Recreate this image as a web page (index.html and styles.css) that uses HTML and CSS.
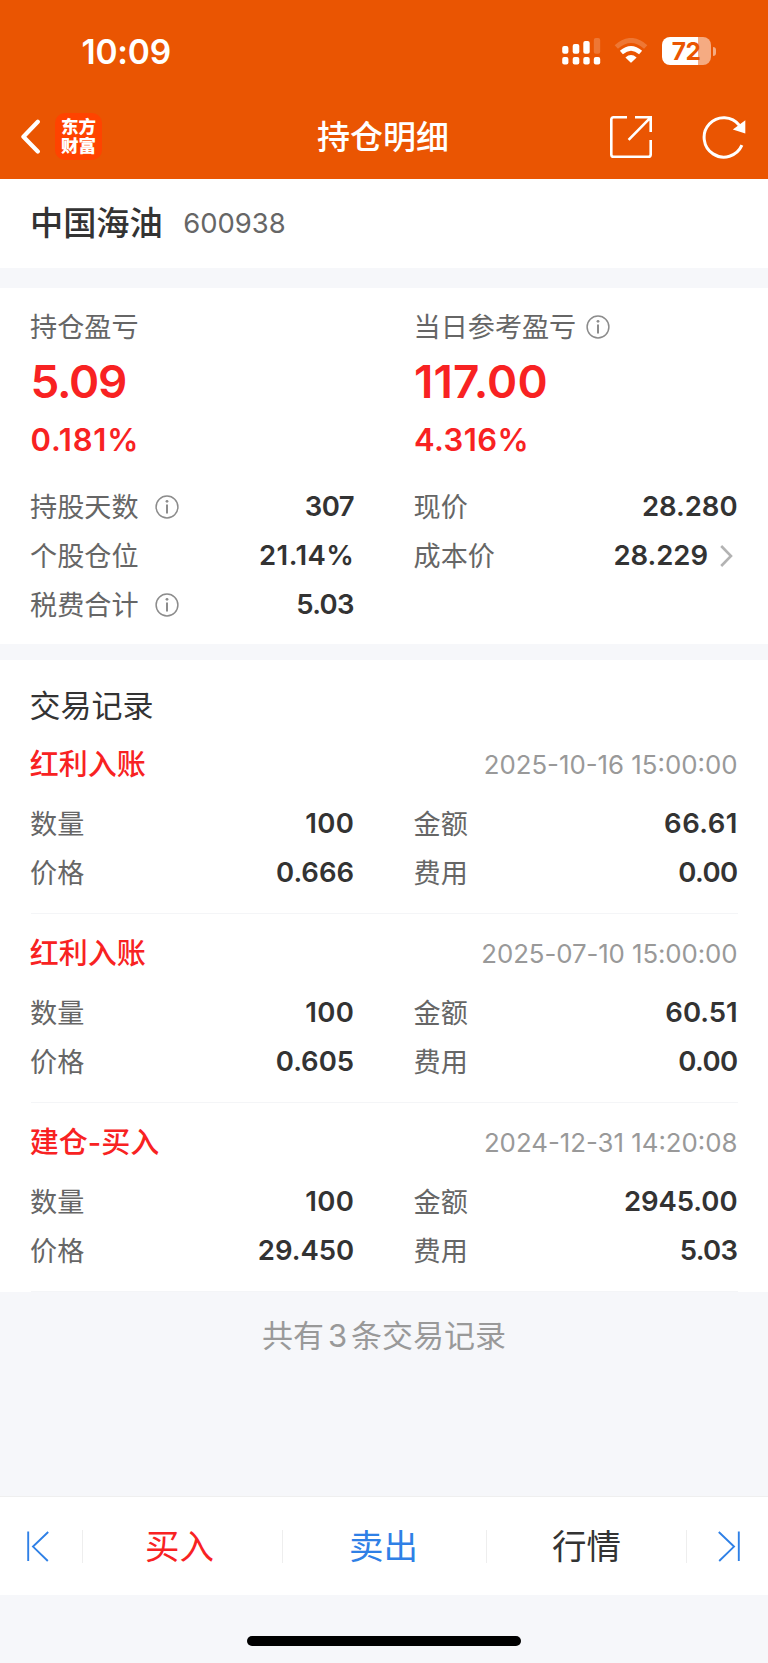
FILE: index.html
```html
<!DOCTYPE html>
<html lang="zh-CN">
<head>
<meta charset="utf-8">
<title>持仓明细</title>
<link rel="stylesheet" href="styles.css">
</head>
<body>
<svg width="0" height="0" class="defs">
  <symbol id="info" viewBox="0 0 24 24">
    <circle cx="12" cy="12" r="10.9" fill="none" stroke="#8c8c8c" stroke-width="1.5"/>
    <circle cx="12" cy="6.3" r="1.4" fill="#8c8c8c"/>
    <path d="M12 9.6V18.6" stroke="#8c8c8c" stroke-width="2" fill="none"/>
  </symbol>
</svg>
<header class="header">
  <div class="status">
    <span class="time">10:09</span>
    <svg class="signal" width="39" height="28" viewBox="0 0 39 28" fill="#fff">
      <rect x="0.2" y="9" width="6.2" height="7.8" rx="2"/>
      <rect x="10.7" y="7" width="6.6" height="9.8" rx="2"/>
      <rect x="21.3" y="4" width="6.4" height="12.8" rx="2"/>
      <rect x="31.8" y="1" width="6.4" height="15.8" rx="2" opacity=".2"/>
      <rect x="0.2" y="20" width="6.2" height="7.6" rx="2"/>
      <rect x="10.7" y="20" width="6.6" height="7.6" rx="2"/>
      <rect x="21.3" y="20" width="6.4" height="7.6" rx="2"/>
      <rect x="31.8" y="20" width="6.4" height="7.6" rx="2"/>
    </svg>
    <svg class="wifi" width="34" height="26" viewBox="0 0 34 26" fill="none">
      <path d="M2.3 9Q17 -4 31.7 9" stroke="#fff" stroke-opacity=".2" stroke-width="5"/>
      <path d="M7.4 14.6Q17 6.2 26.6 14.6" stroke="#fff" stroke-width="4.6"/>
      <path d="M11.4 19.4Q17 14.8 22.6 19.4L17.7 24.3Q17 25 16.3 24.3Z" fill="#fff"/>
    </svg>
    <span class="battery"><span class="battery-text">72</span></span>
    <span class="battery-tip"></span>
  </div>
  <nav class="nav">
    <div class="nav-left">
      <svg width="22" height="36" viewBox="0 0 22 36" fill="none" stroke="#fff" stroke-width="4.2" stroke-linecap="round" stroke-linejoin="round"><path d="M18.8 2.7L4.4 17.7L18.8 32.5"/></svg>
      <span class="logo">东方<br>财富</span>
    </div>
    <h1 class="title">持仓明细</h1>
    <div class="nav-right">
      <svg width="44" height="44" viewBox="0 0 44 44" fill="none" stroke="#fff" stroke-width="2.6">
        <path d="M18 2.3H4.6Q2.3 2.3 2.3 4.6V39.4Q2.3 41.7 4.6 41.7H39.4Q41.7 41.7 41.7 39.4V25"/>
        <path d="M26 2.3H41.7V17M41.2 2.8L19.6 24.8"/>
      </svg>
      <svg width="46" height="46" viewBox="0 0 46 46" fill="none" stroke="#fff" stroke-width="3">
        <path d="M40.9 31.2A19.7 19.7 0 1 1 38.4 11.3"/>
        <path d="M44.3 6.2V19.6L31.8 15.4Z" fill="#fff" stroke="none"/>
      </svg>
    </div>
  </nav>
</header>

<section class="stock">
  <span class="stock-name">中国海油</span>
  <span class="stock-code">600938</span>
</section>

<section class="profit">
  <div class="column">
    <div class="label-row"><span>持仓盈亏</span></div>
    <div class="amount">5.09</div>
    <div class="percent">0.181%</div>
    <div class="row"><span>持股天数</span><svg class="info wide"><use href="#info"/></svg><b class="tight">307</b></div>
    <div class="row"><span>个股仓位</span><b class="loose">21.14%</b></div>
    <div class="row"><span>税费合计</span><svg class="info wide"><use href="#info"/></svg><b class="tight">5.03</b></div>
  </div>
  <div class="column">
    <div class="label-row"><span>当日参考盈亏</span><svg class="info"><use href="#info"/></svg></div>
    <div class="amount today">117.00</div>
    <div class="percent today">4.316%</div>
    <div class="row"><span>现价</span><b>28.280</b></div>
    <div class="row"><span>成本价</span><b>28.229</b><svg class="chevron" viewBox="0 0 13 22" fill="none" stroke="#b3b3b3" stroke-width="2.6"><path d="M1.2 1L11 11L1.2 21"/></svg></div>
  </div>
</section>

<section class="records">
  <h2 class="records-title">交易记录</h2>
  <article class="record">
    <div class="record-head"><strong>红利入账</strong><time>2025-10-16 15:00:00</time></div>
    <div class="pairs">
      <div class="row"><span>数量</span><b class="loose">100</b></div>
      <div class="row"><span>金额</span><b class="loose">66.61</b></div>
      <div class="row"><span>价格</span><b>0.666</b></div>
      <div class="row"><span>费用</span><b class="tight">0.00</b></div>
    </div>
  </article>
  <article class="record">
    <div class="record-head"><strong>红利入账</strong><time class="narrow">2025-07-10 15:00:00</time></div>
    <div class="pairs">
      <div class="row"><span>数量</span><b class="loose">100</b></div>
      <div class="row"><span>金额</span><b>60.51</b></div>
      <div class="row"><span>价格</span><b>0.605</b></div>
      <div class="row"><span>费用</span><b class="tight">0.00</b></div>
    </div>
  </article>
  <article class="record">
    <div class="record-head"><strong>建仓-买入</strong><time>2024-12-31 14:20:08</time></div>
    <div class="pairs">
      <div class="row"><span>数量</span><b class="loose">100</b></div>
      <div class="row"><span>金额</span><b>2945.00</b></div>
      <div class="row"><span>价格</span><b>29.450</b></div>
      <div class="row"><span>费用</span><b class="tight">5.03</b></div>
    </div>
  </article>
</section>

<p class="summary">共有<span class="count">3</span>条交易记录</p>

<footer class="actions">
  <div class="action prev"><svg width="24" height="32" viewBox="0 0 24 32" fill="none" stroke="#2f80e6" stroke-width="1.9"><path d="M2.2 1.5V31M22.2 2L7 16.6L21.8 31"/></svg></div>
  <div class="action buy">买入</div>
  <div class="action sell">卖出</div>
  <div class="action quote">行情</div>
  <div class="action next"><svg width="24" height="32" viewBox="0 0 24 32" fill="none" stroke="#2f80e6" stroke-width="1.9"><path d="M21.8 1.5V31M1.8 2L17 16.6L2.2 31"/></svg></div>
</footer>
<div class="home"></div>
</body>
</html>
```
FILE: styles.css
```css
* { box-sizing: border-box; }

body {
  margin: 0;
  width: 768px;
  height: 1663px;
  overflow: hidden;
  display: flex;
  flex-direction: column;
  background: #f6f7fa;
  color: #333;
  font-family: Inter, "Noto Sans CJK SC", sans-serif;
}

svg { display: block; flex: none; }
.defs { position: absolute; }

.header {
  height: 179px;
  flex: none;
  background: #ea5502;
  color: #fff;
}

.status {
  height: 102px;
  display: flex;
  align-items: center;
  padding: 0 52px 0 81.5px;
}
.time {
  font-size: 33.5px;
  font-weight: 600;
  line-height: 40px;
  letter-spacing: -0.2px;
  margin-right: auto;
  padding-top: 1px;
}
.wifi { margin: 0 14px 0 13px; }
.battery {
  width: 49px;
  height: 28px;
  border-radius: 8px;
  background: linear-gradient(to right, #fff 36px, #f5ab82 36px);
  color: #ea5502;
  font-size: 24.5px;
  font-weight: 700;
  line-height: 28px;
  text-align: center;
  letter-spacing: -0.5px;
  padding-right: 1px;
}
.battery-tip {
  width: 3px;
  height: 9px;
  margin-left: 2px;
  border-radius: 0 4px 4px 0;
  background: #f5ab82;
}

.nav {
  height: 69px;
  display: grid;
  grid-template-columns: 1fr auto 1fr;
  align-items: center;
  padding: 0 21px 0 19px;
}
.nav-left { display: flex; align-items: center; gap: 14px; }
.nav-right { display: flex; align-items: center; justify-content: flex-end; gap: 48px; }
.logo {
  width: 47px;
  height: 47px;
  padding-top: 3.5px;
  border-radius: 10px;
  background: #ff4300;
  font-size: 17.5px;
  font-weight: 900;
  line-height: 19.6px;
  text-align: center;
}
.title {
  margin: 0;
  font-size: 33px;
  font-weight: 500;
  line-height: 44px;
}

.stock {
  height: 89px;
  flex: none;
  display: flex;
  align-items: center;
  gap: 20.5px;
  padding: 0 30.5px 2px 30px;
  background: #fff;
  line-height: 44px;
}
.stock-name { font-size: 33.2px; font-weight: 500; }
.stock-code { font-size: 27.4px; color: #666; }

.profit {
  height: 356px;
  flex: none;
  margin-top: 20px;
  padding: 19px 30.5px 0;
  display: grid;
  grid-template-columns: 1fr 1fr;
  column-gap: 60px;
  background: #fff;
}
.label-row {
  display: flex;
  align-items: center;
  height: 40px;
  color: #666;
  font-size: 27.1px;
  line-height: 40px;
}
.label-row span, .row span { padding-top: 2px; margin-left: -0.4px; }
.amount {
  height: 70px;
  color: #f82222;
  font-size: 45.8px;
  font-weight: 600;
  line-height: 70px;
  letter-spacing: -1.2px;
}
.amount.today { letter-spacing: 0.1px; }
.percent {
  height: 45px;
  margin-bottom: 20px;
  color: #f82222;
  font-size: 31px;
  font-weight: 600;
  line-height: 45px;
  letter-spacing: 0.8px;
}
.percent.today { letter-spacing: 0.4px; }
.row {
  display: flex;
  align-items: center;
  height: 49.1px;
  font-size: 27.1px;
  line-height: 49px;
}
.row span { color: #666; }
.row b {
  margin-left: auto;
  font-weight: 600;
  font-size: 27.5px;
  letter-spacing: -0.05px;
}
.row .tight { letter-spacing: -0.6px; }
.row .loose { letter-spacing: 0.45px; margin-right: -0.4px; }
.info { width: 24px; height: 24px; margin-left: 10px; }
.info.wide { margin-left: 17px; }
.chevron { width: 13px; height: 22px; margin: 0 4.5px 0 12px; }

.records {
  flex: none;
  margin-top: 16px;
  padding: 25px 30.5px 0;
  background: #fff;
}
.records-title {
  margin: 0 0 0 -1px;
  padding-top: 1px;
  height: 40px;
  font-size: 31px;
  font-weight: 400;
  line-height: 40px;
}
.record {
  height: 189px;
  padding-top: 19px;
  border-bottom: 1px solid #f4f5f7;
}
.record-head {
  display: flex;
  align-items: center;
  justify-content: space-between;
  height: 40px;
  margin-bottom: 15px;
  line-height: 40px;
}
.record-head strong { margin-left: -0.7px; padding-top: 2px; color: #f82222; font-size: 29px; font-weight: 500; }
.record-head time { padding-top: 1px; color: #999; font-size: 25.8px; }
.record-head .narrow { letter-spacing: -0.08px; }
.pairs { display: grid; grid-template-columns: 1fr 1fr; column-gap: 60px; }

.summary {
  flex: none;
  height: 88px;
  margin: 0;
  color: #999;
  font-size: 31px;
  line-height: 88px;
  text-align: center;
}
.count { margin: 0 4px; }

.actions {
  flex: none;
  height: 99px;
  margin-top: auto;
  display: grid;
  grid-template-columns: 81.5px 200px 204px 200px 82.5px;
  align-items: center;
  border-top: 1px solid #efefef;
  background: #fff;
  font-size: 34.5px;
}
.action {
  display: flex;
  justify-content: center;
  align-items: center;
  height: 33px;
  line-height: 33px;
  border-left: 1px solid #eee;
}
.prev { border-left: 0; justify-content: flex-start; padding-left: 26px; }
.next { justify-content: flex-start; padding-left: 30.5px; }
.buy { color: #f82222; padding-right: 5px; }
.sell { color: #2f80e6; padding-right: 1px; }
.quote { padding-left: 1px; }

.home {
  flex: none;
  width: 274px;
  height: 10px;
  margin: 41px auto 17px;
  border-radius: 5px;
  background: #000;
}
```
